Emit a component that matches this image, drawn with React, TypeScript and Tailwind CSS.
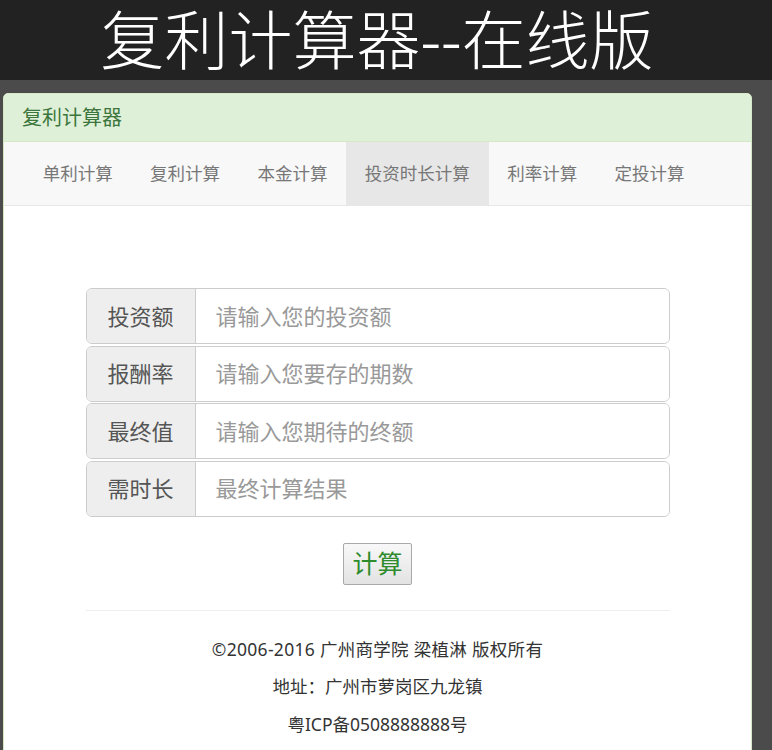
export default function App() {
  const tabs = ["单利计算", "复利计算", "本金计算", "投资时长计算", "利率计算", "定投计算"];
  const rows = [
    { label: "投资额", placeholder: "请输入您的投资额" },
    { label: "报酬率", placeholder: "请输入您要存的期数" },
    { label: "最终值", placeholder: "请输入您期待的终额" },
    { label: "需时长", placeholder: "最终计算结果" },
  ];

  return (
    <div
      className="min-h-[750px] bg-[#4b4b4b]"
      style={{ fontFamily: '"Noto Sans", "Noto Sans CJK SC", sans-serif' }}
    >
      <header className="flex h-[80px] items-center justify-center bg-[#222222]">
        <h1 className="pr-[18px] text-[64px] leading-[1.2] font-light text-white">
          复利计算器--在线版
        </h1>
      </header>

      <div className="mt-[13px] ml-[3px] mr-[20px] overflow-hidden rounded-t-[5px] border border-[#d6e9c6] bg-white pb-[30px]">
        <div className="flex h-[48px] items-center border-b border-[#d6e9c6] bg-[#dff0d8] px-[18px] text-[20px] text-[#3c763d]">
          复利计算器
        </div>

        <nav className="flex h-[64px] border-b border-[#e7e7e7] bg-[#f8f8f8] pl-[20px]">
          {tabs.map((t) => (
            <div
              key={t}
              className={`flex items-center px-[18.7px] text-[17.5px] text-[#777777] ${
                t === "投资时长计算" ? "bg-[#e7e7e7] text-[#555555]" : ""
              }`}
            >
              {t}
            </div>
          ))}
        </nav>

        <div className="flex flex-col items-center pt-[82px]">
          <div className="flex w-[584px] flex-col gap-[1.5px]">
            {rows.map((r) => (
              <div
                key={r.label}
                className="flex h-[56px] overflow-hidden rounded-[6px] border border-[#cccccc]"
              >
                <div className="flex w-[109px] shrink-0 items-center justify-center border-r border-[#cccccc] bg-[#eeeeee] text-[22px] text-[#555555]">
                  {r.label}
                </div>
                <input
                  className="min-w-0 flex-1 bg-white pl-[20px] text-[22px] text-[#555555] outline-none placeholder:text-[#999999]"
                  placeholder={r.placeholder}
                />
              </div>
            ))}
          </div>

          <button className="mt-[26px] h-[42px] w-[69px] rounded-[2px] border border-[#a9a9a9] bg-gradient-to-b from-[#f8f8f8] to-[#e3e3e3] text-[25px] leading-none text-[#2e8b2e]">
            计算
          </button>

          <div className="mt-[25px] w-[584px] border-t border-[#eeeeee]" />

          <footer className="flex flex-col items-center pt-[20px] text-[17.5px] text-[#333333]">
            <p className="leading-[37.5px] tracking-[0.3px]">©2006-2016 广州商学院 梁植淋 版权所有</p>
            <p className="leading-[37.5px]">地址：广州市萝岗区九龙镇</p>
            <p className="leading-[37.5px]">粤ICP备0508888888号</p>
          </footer>
        </div>
      </div>
    </div>
  );
}
